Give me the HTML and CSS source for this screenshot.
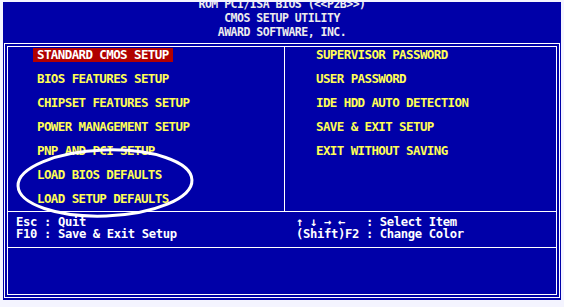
FILE: index.html
```html
<!DOCTYPE html>
<html lang="en">
<head>
  <meta charset="UTF-8">
  <title>CMOS Setup Utility</title>
  <link rel="stylesheet" href="styles.css">
</head>
<body>
  <div class="screen">
    <div class="header">
      <p>ROM PCI/ISA BIOS (&lt;&lt;P2B&gt;&gt;)</p>
      <p>CMOS SETUP UTILITY</p>
      <p>AWARD SOFTWARE, INC.</p>
    </div>

    <div class="frame">
      <div class="inner">
        <div class="menu">
          <ul class="col col-left">
            <li class="selected">STANDARD CMOS SETUP</li>
            <li>BIOS FEATURES SETUP</li>
            <li>CHIPSET FEATURES SETUP</li>
            <li>POWER MANAGEMENT SETUP</li>
            <li>PNP AND PCI SETUP</li>
            <li>LOAD BIOS DEFAULTS</li>
            <li>LOAD SETUP DEFAULTS</li>
          </ul>
          <ul class="col col-right">
            <li>SUPERVISOR PASSWORD</li>
            <li>USER PASSWORD</li>
            <li>IDE HDD AUTO DETECTION</li>
            <li>SAVE &amp; EXIT SETUP</li>
            <li>EXIT WITHOUT SAVING</li>
          </ul>
        </div>
        <div class="keys">
          <div class="keys-left">
            <p>Esc : Quit</p>
            <p>F10 : Save &amp; Exit Setup</p>
          </div>
          <div class="keys-right">
            <p>↑ ↓ → ←   : Select Item</p>
            <p>(Shift)F2 : Change Color</p>
          </div>
        </div>
        <div class="status"></div>
      </div>
    </div>

    <!-- hand drawn circle round the two defaults items -->
    <svg class="circle" width="558" height="300" viewBox="0 0 558 300">
      <ellipse cx="102" cy="181" rx="87" ry="33" fill="none" stroke="#fff" stroke-width="3" transform="rotate(-2 102 181)"/>
    </svg>
  </div>
</body>
</html>
```

FILE: styles.css
```css
* {
  box-sizing: border-box;
  margin: 0;
  padding: 0;
}

body {
  background: #f4f4ff;
  font-family: 'DejaVu Sans Mono', 'Liberation Mono', monospace;
  font-weight: bold;
}

.screen {
  position: relative;
  margin: 2px 3px;
  width: 558px;
  height: 298px;
  background: #0000a8;
  overflow: hidden;
}

.header {
  height: 47px;
  margin-top: -5px;
  text-align: center;
  color: #ececec;
  font-size: 11.5px;
  letter-spacing: -0.5px;
  line-height: 14px;
}

.frame {
  margin: -1px 1px 0;
  width: 556px;
  height: 255px;
  border: 1px solid #fff;
  padding: 2px;
}

.inner {
  height: 100%;
  border: 1px solid #fff;
  display: flex;
  flex-direction: column;
}

.menu {
  display: grid;
  grid-template-columns: 277px 1fr;
  height: 165px;
  border-bottom: 1px solid #fff;
}

.col {
  list-style: none;
  padding-top: 1px;
  display: flex;
  flex-direction: column;
  align-items: flex-start;
  gap: 10px;
  font-size: 12.5px;
  letter-spacing: -0.6px;
  line-height: 14px;
  color: #ffff55;
}

.col li {
  padding: 0 4px;
  height: 14px;
}

.col-left {
  padding-left: 25px;
  border-right: 1px solid #fff;
}

.col-right {
  padding-left: 27px;
}

.selected {
  background: #b00000;
  color: #fff;
}

.keys {
  display: grid;
  grid-template-columns: 278px 1fr;
  height: 36px;
  padding-top: 4px;
  border-bottom: 1px solid #fff;
  color: #fff;
  font-size: 12.2px;
  letter-spacing: -0.35px;
  line-height: 12px;
}

.keys p {
  white-space: pre;
}

.keys-left {
  padding-left: 8px;
}

.keys-right {
  padding-left: 10px;
}

.status {
  flex: 1;
}

.circle {
  position: absolute;
  left: 0;
  top: 0;
  pointer-events: none;
}
```
